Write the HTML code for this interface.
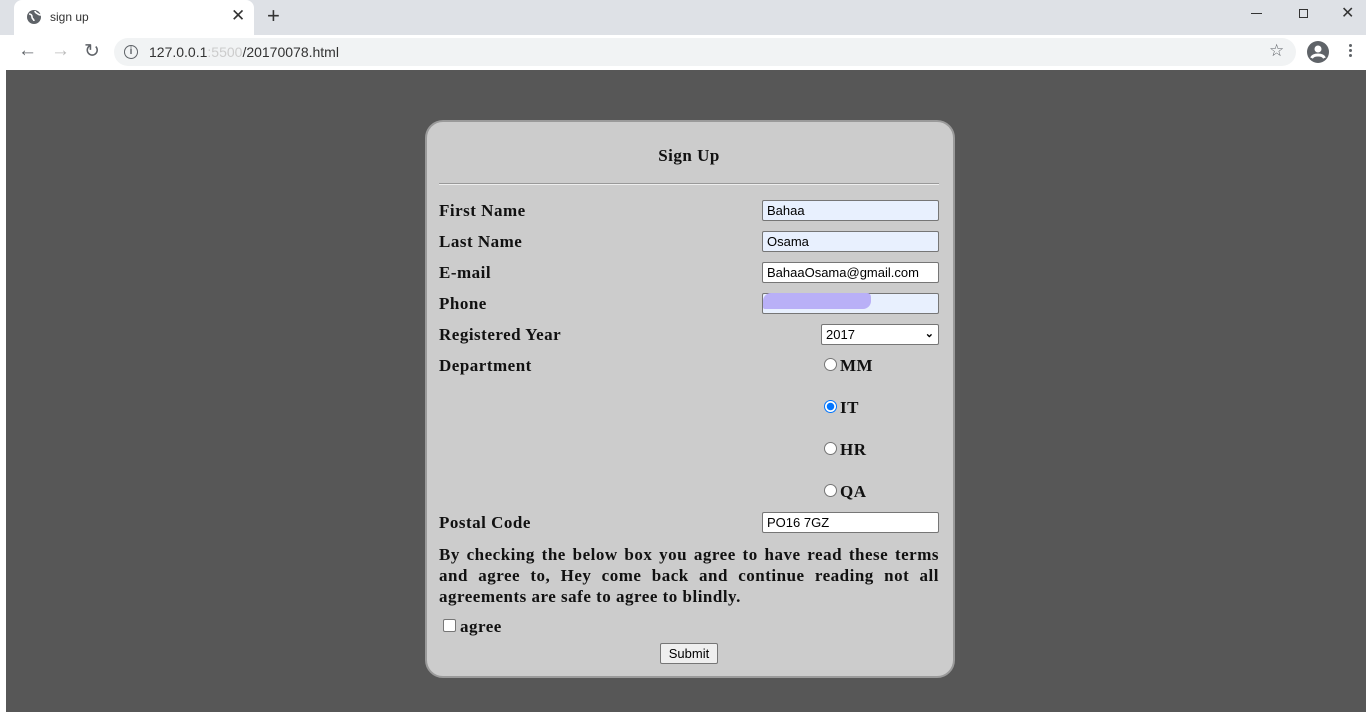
<!DOCTYPE html>
<html><head><meta charset="utf-8">
<style>
*{box-sizing:border-box;margin:0;padding:0}
body{width:1366px;height:712px;overflow:hidden;background:#fff;position:relative;font-family:"Liberation Sans",sans-serif}
.abs{position:absolute}
.tabbar{left:0;top:0;width:1366px;height:35px;background:#dee1e6}
.tab{left:14px;top:0;width:240px;height:35px;background:#fff;border-radius:8px 8px 0 0}
.toolbar{left:0;top:35px;width:1366px;height:35px;background:#fff}
.omni{left:114px;top:38px;width:1182px;height:28px;background:#f1f3f4;border-radius:14px}
.page{left:6px;top:70px;width:1360px;height:642px;background:#575757}
.panel{left:425px;top:120px;width:530px;height:558px;background:#cccccc;border:2px solid #9a9a9a;border-radius:18px}
.lbl{font-family:"Liberation Serif",serif;font-weight:bold;font-size:17px;color:#111;left:439px;line-height:20px;letter-spacing:0.5px}
.inp{left:762px;width:177px;height:21px;border:1px solid #767676;border-radius:2px;background:#e8f0fe;font-size:13px;padding-left:4px;line-height:19px;color:#000}
.radio{left:824px;width:13px;height:13px;border-radius:50%;border:1px solid #767676;background:#fff}
.rl{left:840px}
.jl{display:block;text-align:justify;text-align-last:justify;height:21px}
</style></head><body>
<div class="abs tabbar"></div>
<div class="abs tab"></div>
<svg class="abs" style="left:26px;top:9px" width="16" height="16" viewBox="0 0 16 16"><circle cx="8" cy="8" r="7" fill="#5f6368"/><path d="M3 5c2 0 3 1 3 3s2 2 2 4M9 2c0 2 2 2 3 3s2 1 3 1" stroke="#fff" stroke-width="1.6" fill="none"/></svg>
<div class="abs" style="left:50px;top:10px;font-size:12px;color:#333">sign up</div>
<div class="abs" style="left:231px;top:6px;font-size:17px;color:#333">✕</div>
<div class="abs" style="left:267px;top:3px;font-size:22px;color:#333">+</div>
<div class="abs" style="left:1251px;top:13px;width:11px;height:1px;background:#333"></div>
<div class="abs" style="left:1299px;top:9px;width:9px;height:9px;border:1px solid #333"></div>
<div class="abs" style="left:1341px;top:3px;font-size:16px;color:#333">✕</div>
<div class="abs toolbar"></div>
<div class="abs" style="left:18px;top:40px;font-size:19px;color:#5f6368">←</div>
<div class="abs" style="left:51px;top:40px;font-size:19px;color:#bbb">→</div>
<div class="abs" style="left:84px;top:40px;font-size:19px;color:#5f6368">↻</div>
<div class="abs omni"></div>
<div class="abs" style="left:124px;top:45px;width:14px;height:14px;border:1.5px solid #5f6368;border-radius:50%;font-size:10px;text-align:center;line-height:11px;color:#5f6368;font-weight:bold">i</div>
<div class="abs" style="left:149px;top:44px;font-size:14px;color:#333">127.0.0.1<span style="color:#ccc">:5500</span>/20170078.html</div>
<div class="abs" style="left:1269px;top:41px;font-size:17px;color:#5f6368">☆</div>
<svg class="abs" style="left:1307px;top:41px" width="22" height="22" viewBox="0 0 22 22"><circle cx="11" cy="11" r="11" fill="#5f6368"/><circle cx="11" cy="8" r="3.5" fill="#fff"/><path d="M4.5 17c2-4 11-4 13 0" stroke="#fff" stroke-width="3" fill="none"/></svg>
<div class="abs" style="left:1349px;top:44px;width:3px;height:3px;background:#5f6368;border-radius:50%;box-shadow:0 5px 0 #5f6368,0 10px 0 #5f6368"></div>
<div class="abs page"></div>
<div class="abs panel"></div>
<div class="abs lbl" style="left:0;width:1378px;text-align:center;top:146px">Sign Up</div>
<div class="abs" style="left:439px;top:183px;width:500px;height:2px;border-top:1px solid #999;border-bottom:1px solid #eee"></div>
<div class="abs lbl" style="top:201px">First Name</div>
<div class="abs lbl" style="top:232px">Last Name</div>
<div class="abs lbl" style="top:263px">E-mail</div>
<div class="abs lbl" style="top:294px">Phone</div>
<div class="abs lbl" style="top:325px">Registered Year</div>
<div class="abs lbl" style="top:356px">Department</div>
<div class="abs inp" style="top:200px">Bahaa</div>
<div class="abs inp" style="top:231px">Osama</div>
<div class="abs inp" style="top:262px;background:#fff">BahaaOsama@gmail.com</div>
<div class="abs inp" style="top:293px"></div>
<div class="abs" style="left:763px;top:293px;width:108px;height:16px;background:#b9b0f7;border-radius:8px 4px 8px 2px"></div>
<div class="abs inp" style="top:324px;left:821px;width:118px;background:#fff">2017<span style="position:absolute;right:4px;top:0;font-weight:bold;font-size:11px">⌄</span></div>
<div class="abs radio" style="top:358px"></div><div class="abs lbl rl" style="top:356px">MM</div>
<div class="abs radio" style="top:400px;border:1px solid #0075ff;background:radial-gradient(circle,#0075ff 3.5px,#fff 4px)"></div><div class="abs lbl rl" style="top:398px">IT</div>
<div class="abs radio" style="top:442px"></div><div class="abs lbl rl" style="top:440px">HR</div>
<div class="abs radio" style="top:484px"></div><div class="abs lbl rl" style="top:482px">QA</div>
<div class="abs lbl" style="top:513px">Postal Code</div>
<div class="abs inp" style="top:512px;background:#fff">PO16 7GZ</div>
<div class="abs lbl" style="top:544px;width:500px;line-height:21px">
<span class="jl">By checking the below box you agree to have read these terms</span>
<span class="jl">and agree to, Hey come back and continue reading not all</span>
<span style="display:block">agreements are safe to agree to blindly.</span></div>
<div class="abs" style="left:443px;top:619px;width:13px;height:13px;border:1px solid #767676;border-radius:2px;background:#fff"></div>
<div class="abs lbl" style="left:460px;top:617px">agree</div>
<div class="abs" style="left:660px;top:643px;width:58px;height:21px;border:1px solid #767676;border-radius:2px;background:#efefef;font-size:13px;text-align:center;line-height:19px">Submit</div>
</body></html>
